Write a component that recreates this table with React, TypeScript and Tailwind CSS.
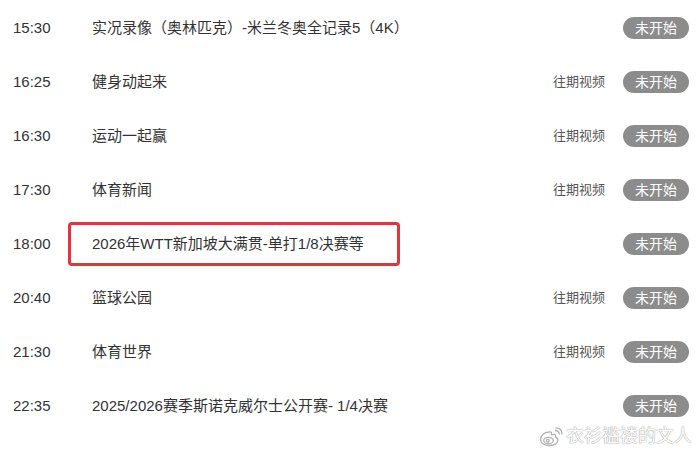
const rows = [
  { time: "15:30", title: "实况录像（奥林匹克）-米兰冬奥全记录5（4K）", replay: false },
  { time: "16:25", title: "健身动起来", replay: true },
  { time: "16:30", title: "运动一起赢", replay: true },
  { time: "17:30", title: "体育新闻", replay: true },
  { time: "18:00", title: "2026年WTT新加坡大满贯-单打1/8决赛等", replay: false, mark: true },
  { time: "20:40", title: "篮球公园", replay: true },
  { time: "21:30", title: "体育世界", replay: true },
  { time: "22:35", title: "2025/2026赛季斯诺克威尔士公开赛- 1/4决赛", replay: false },
];

function WeiboLogo() {
  return (
    <svg width="24" height="20" viewBox="0 0 24 20" fill="none" stroke="#b0b0b0" strokeWidth="1.3">
      <path d="M10 5C5 5 1.5 9 1.5 12.5 1.5 16.5 6 18.5 10.5 18.5 15.5 18.5 19 16 19 13 19 11 17 10.5 16.5 10.2 17.2 8.5 16.5 7 14 7.6 12.5 8 12 7.8 12.5 6.5 13 5 11.5 4.8 10 5Z" fill="#fff" />
      <ellipse cx="9.5" cy="13.5" rx="4.8" ry="3.2" />
      <circle cx="8.8" cy="13.8" r="1.4" />
      <path d="M16 3.5C18.5 3.3 20.5 5 20.2 7.5" />
      <path d="M16.5 0.8C20.5 0.5 23.5 3.5 22.8 7.5" />
    </svg>
  );
}

export default function App() {
  return (
    <div
      className="relative h-[451px] w-[700px] overflow-hidden bg-white pt-[1px] text-[15px] text-[#333]"
      style={{ fontFamily: '"Liberation Sans", "Noto Sans CJK SC", sans-serif' }}
    >
      {rows.map((r) => (
        <div key={r.time} className="flex h-[54px] items-center pl-[13px] pr-[11px]">
          <span className="w-[79px] shrink-0">{r.time}</span>
          <div className="flex-1">
            {r.mark ? (
              <div className="-ml-[24px] flex h-[44px] w-[332px] items-center rounded-[4px] border-[3px] border-[#e3343c] pl-[21px]">
                {r.title}
              </div>
            ) : (
              <span>{r.title}</span>
            )}
          </div>
          {r.replay && <span className="mr-[18px] text-[13px] text-[#555]">往期视频</span>}
          <span className="flex h-[22px] w-[66px] items-center justify-center rounded-full bg-[#8c8c8c] text-[14px] text-white">
            未开始
          </span>
        </div>
      ))}
      {/* watermark */}
      <div className="absolute bottom-[1px] right-[8px] flex items-center gap-[3px]">
        <WeiboLogo />
        <span className="text-[18px] text-white [text-shadow:0_0_1px_#999,0_0_1px_#aaa]">
          衣衫褴褛的文人
        </span>
      </div>
    </div>
  );
}
